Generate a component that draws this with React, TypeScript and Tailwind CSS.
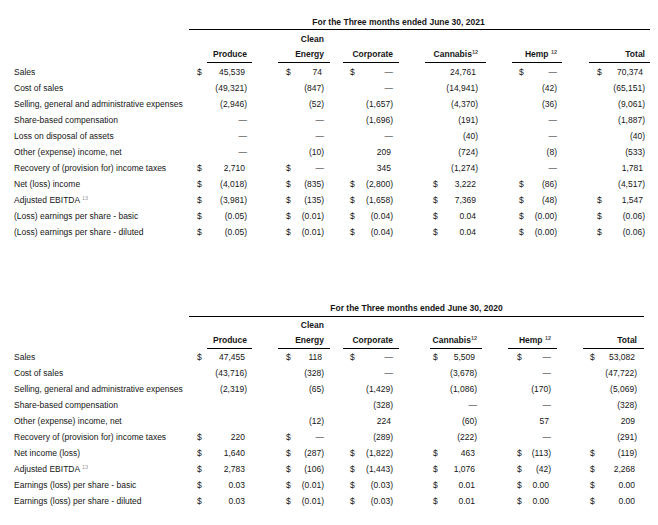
import React from "react";

type Cell = { d?: boolean; v: string };
type Seg = { cell: string; pad: string; pr: string; ul?: string };
type Row = { label: React.ReactNode; cells: Cell[] };

const c = (v: string, d = false): Cell => ({ v, d });
const D = "—";

const Sup = ({ n, light }: { n: string; light?: boolean }) => (
  <span
    className={
      "relative -top-[3px] text-[5.5px] leading-none " +
      (light ? "text-[#9a9a9a]" : "text-[#555]")
    }
  >
    {n}
  </span>
);

const headers: React.ReactNode[][] = [
  ["Produce"],
  ["Clean", "Energy"],
  ["Corporate"],
  [
    <span key="c">
      Cannabis
      <Sup n="12" />
    </span>,
  ],
  [
    <span key="h">
      Hemp <Sup n="12" />
    </span>,
  ],
  ["Total"],
];

const seg1: Seg[] = [
  { cell: "w-[63px]", pad: "pl-[8px]", pr: "pr-[5px]", ul: "ml-[18px]" },
  { cell: "ml-[26px] w-[52px]", pad: "pl-[8px]", pr: "pr-[6px]" },
  { cell: "ml-[13px] w-[56px]", pad: "pl-[7px]", pr: "pr-[6px]" },
  { cell: "ml-[26px] w-[61px]", pad: "pl-[8px]", pr: "pr-[8px]" },
  { cell: "ml-[26px] w-[50px]", pad: "pl-[7px]", pr: "pr-[5px]" },
  { cell: "ml-[27px] w-[61px]", pad: "pl-[8px]", pr: "pr-[5px]" },
];

const seg2: Seg[] = [
  { cell: "w-[63px]", pad: "pl-[8px]", pr: "pr-[5px]", ul: "ml-[18px]" },
  { cell: "ml-[26px] w-[52px]", pad: "pl-[8px]", pr: "pr-[6px]" },
  { cell: "ml-[13px] w-[56px]", pad: "pl-[7px]", pr: "pr-[6px]" },
  { cell: "ml-[31px] w-[52px]", pad: "pl-[3px]", pr: "pr-[5px]" },
  { cell: "ml-[26px] w-[49px]", pad: "pl-[9px]", pr: "pr-[6px]" },
  { cell: "ml-[26px] w-[61px]", pad: "pl-[7px]", pr: "pr-[7px]" },
];

const ebitda = (
  <span>
    Adjusted EBITDA <Sup n="13" light />
  </span>
);

const rows1: Row[] = [
  { label: "Sales", cells: [c("45,539", true), c("74", true), c(D, true), c("24,761"), c(D, true), c("70,374", true)] },
  { label: "Cost of sales", cells: [c("(49,321)"), c("(847)"), c(D), c("(14,941)"), c("(42)"), c("(65,151)")] },
  { label: "Selling, general and administrative expenses", cells: [c("(2,946)"), c("(52)"), c("(1,657)"), c("(4,370)"), c("(36)"), c("(9,061)")] },
  { label: "Share-based compensation", cells: [c(D), c(D), c("(1,696)"), c("(191)"), c(D), c("(1,887)")] },
  { label: "Loss on disposal of assets", cells: [c(D), c(D), c(D), c("(40)"), c(D), c("(40)")] },
  { label: "Other (expense) income, net", cells: [c(D), c("(10)"), c("209"), c("(724)"), c("(8)"), c("(533)")] },
  { label: "Recovery of (provision for) income taxes", cells: [c("2,710", true), c(D, true), c("345"), c("(1,274)"), c(D), c("1,781")] },
  { label: "Net (loss) income", cells: [c("(4,018)", true), c("(835)", true), c("(2,800)", true), c("3,222", true), c("(86)", true), c("(4,517)")] },
  { label: ebitda, cells: [c("(3,981)", true), c("(135)", true), c("(1,658)", true), c("7,369", true), c("(48)", true), c("1,547", true)] },
  { label: "(Loss) earnings per share - basic", cells: [c("(0.05)", true), c("(0.01)", true), c("(0.04)", true), c("0.04", true), c("(0.00)", true), c("(0.06)", true)] },
  { label: "(Loss) earnings per share - diluted", cells: [c("(0.05)", true), c("(0.01)", true), c("(0.04)", true), c("0.04", true), c("(0.00)", true), c("(0.06)", true)] },
];

const rows2: Row[] = [
  { label: "Sales", cells: [c("47,455", true), c("118", true), c(D, true), c("5,509", true), c(D, true), c("53,082", true)] },
  { label: "Cost of sales", cells: [c("(43,716)"), c("(328)"), c(D), c("(3,678)"), c(D), c("(47,722)")] },
  { label: "Selling, general and administrative expenses", cells: [c("(2,319)"), c("(65)"), c("(1,429)"), c("(1,086)"), c("(170)"), c("(5,069)")] },
  { label: "Share-based compensation", cells: [c(""), c(""), c("(328)"), c(D), c(D), c("(328)")] },
  { label: "Other (expense) income, net", cells: [c(""), c("(12)"), c("224"), c("(60)"), c("57"), c("209")] },
  { label: "Recovery of (provision for) income taxes", cells: [c("220", true), c(D, true), c("(289)"), c("(222)"), c(D), c("(291)")] },
  { label: "Net income (loss)", cells: [c("1,640", true), c("(287)", true), c("(1,822)", true), c("463", true), c("(113)", true), c("(119)", true)] },
  { label: ebitda, cells: [c("2,783", true), c("(106)", true), c("(1,443)", true), c("1,076", true), c("(42)", true), c("2,268", true)] },
  { label: "Earnings (loss) per share - basic", cells: [c("0.03", true), c("(0.01)", true), c("(0.03)", true), c("0.01", true), c("0.00", true), c("0.00", true)] },
  { label: "Earnings (loss) per share - diluted", cells: [c("0.03", true), c("(0.01)", true), c("(0.03)", true), c("0.01", true), c("0.00", true), c("0.00", true)] },
];

function Value({ v }: { v: string }) {
  const flush = v.startsWith("(") || v === D || v === "";
  return <span className={"ml-auto " + (flush ? "" : "pr-[2px]")}>{v}</span>;
}

function Table({
  title,
  titleBox,
  ruleBox,
  segs,
  rows,
  headerPad,
  rowsPad,
}: {
  title: string;
  titleBox: string;
  ruleBox: string;
  segs: Seg[];
  rows: Row[];
  headerPad: string;
  rowsPad: string;
}) {
  return (
    <div>
      <div className={"ml-[189px] text-center font-bold " + titleBox}>{title}</div>
      <div className={"ml-[189px] h-px bg-black " + ruleBox} />
      <div className={"flex " + headerPad}>
        <div className="w-[189px] shrink-0" />
        {segs.map((s, i) => (
          <div key={i} className={"flex shrink-0 flex-col justify-end " + s.cell}>
            <div
              className={
                "border-b border-black text-right font-bold leading-[15px] " +
                s.pr +
                " " +
                (s.ul ?? "")
              }
            >
              {headers[i].map((h, j) => (
                <div key={j}>{h}</div>
              ))}
            </div>
          </div>
        ))}
      </div>
      <div className={rowsPad}>
        {rows.map((r, ri) => (
          <div key={ri} className="flex h-[16px] leading-[16px]">
            <div className="w-[189px] shrink-0 whitespace-nowrap pl-[14px]">{r.label}</div>
            {r.cells.map((cl, ci) => (
              <div
                key={ci}
                className={"flex shrink-0 " + segs[ci].cell + " " + segs[ci].pad + " " + segs[ci].pr}
              >
                {cl.d ? <span>$</span> : null}
                <Value v={cl.v} />
              </div>
            ))}
          </div>
        ))}
      </div>
    </div>
  );
}

export default function App() {
  return (
    <div className="h-[525px] w-[658px] overflow-hidden bg-white font-['Liberation_Sans',Arial,sans-serif] text-[8.5px] text-[#161616]">
      <div className="pt-[15px]">
        <Table
          title="For the Three months ended June 30, 2021"
          titleBox="w-[419px] leading-[14px]"
          ruleBox="w-[461px]"
          segs={seg1}
          rows={rows1}
          headerPad="pt-[2px]"
          rowsPad="pt-[1px]"
        />
      </div>
      <div className="mt-[61px]">
        <Table
          title="For the Three months ended June 30, 2020"
          titleBox="w-[455px] leading-[15px]"
          ruleBox="w-[455px]"
          segs={seg2}
          rows={rows2}
          headerPad="pt-[1px]"
          rowsPad=""
        />
      </div>
    </div>
  );
}
